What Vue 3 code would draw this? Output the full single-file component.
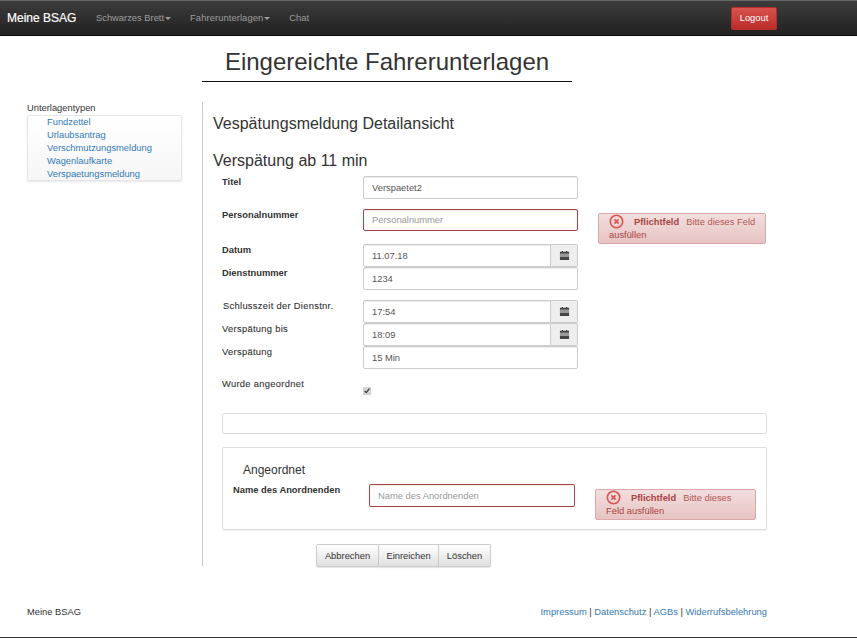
<script setup>
const sidebarItems = ['Fundzettel', 'Urlaubsantrag', 'Verschmutzungsmeldung', 'Wagenlaufkarte', 'Verspaetungsmeldung']
</script>

<template>
  <div class="page">
    <nav class="navbar">
      <a class="brand">Meine BSAG</a>
      <a class="nav-link">Schwarzes Brett<span class="caret"></span></a>
      <a class="nav-link long">Fahrerunterlagen<span class="caret"></span></a>
      <a class="nav-link">Chat</a>
      <button class="logout">Logout</button>
    </nav>

    <h1 class="title">Eingereichte Fahrerunterlagen</h1>

    <div class="content">
      <aside class="sidebar">
        <div class="side-label">Unterlagentypen</div>
        <ul class="side-list">
          <li v-for="item in sidebarItems" :key="item"><a>{{ item }}</a></li>
        </ul>
      </aside>

      <main class="main">
        <h2 class="h-detail">Vespätungsmeldung Detailansicht</h2>
        <h3 class="h-sub">Verspätung ab 11 min</h3>

        <form class="form" @submit.prevent>
          <div class="row r-titel">
            <label>Titel</label>
            <input class="field" value="Verspaetet2" />
          </div>

          <div class="row r-personal">
            <label>Personalnummer</label>
            <input class="field invalid" placeholder="Personalnummer" />
            <div class="alert a-one">
              <svg class="err-icon" viewBox="0 0 16 16"><circle cx="8" cy="8" r="6.6" /><path d="M5.8 5.8l4.4 4.4M10.2 5.8l-4.4 4.4" /></svg>
              <strong>Pflichtfeld</strong><span class="msg">Bitte dieses Feld</span><br />ausfüllen
            </div>
          </div>

          <div class="row r-datum">
            <label>Datum</label>
            <div class="group">
              <input class="field" value="11.07.18" />
              <span class="addon"><svg viewBox="0 0 12 12"><path d="M1 2h2V1h1.5v1h3V1H9v1h2v2H1zM1 5h10v1H1zM1 7h10v4H1z" /></svg></span>
            </div>
          </div>

          <div class="row r-tight">
            <label>Dienstnummer</label>
            <input class="field" value="1234" />
          </div>

          <div class="row r-schluss">
            <label class="plain nudge">Schlusszeit der Dienstnr.</label>
            <div class="group">
              <input class="field" value="17:54" />
              <span class="addon"><svg viewBox="0 0 12 12"><path d="M1 2h2V1h1.5v1h3V1H9v1h2v2H1zM1 5h10v1H1zM1 7h10v4H1z" /></svg></span>
            </div>
          </div>

          <div class="row r-tight">
            <label class="plain">Verspätung bis</label>
            <div class="group">
              <input class="field" value="18:09" />
              <span class="addon"><svg viewBox="0 0 12 12"><path d="M1 2h2V1h1.5v1h3V1H9v1h2v2H1zM1 5h10v1H1zM1 7h10v4H1z" /></svg></span>
            </div>
          </div>

          <div class="row r-tight">
            <label class="plain">Verspätung</label>
            <input class="field" value="15 Min" />
          </div>

          <div class="row r-check">
            <label class="plain">Wurde angeordnet</label>
            <input class="check" type="checkbox" checked />
          </div>

          <div class="empty-box"></div>

          <section class="panel">
            <h4 class="panel-title">Angeordnet</h4>
            <div class="panel-row">
              <label>Name des Anordnenden</label>
              <input class="field invalid" placeholder="Name des Anordnenden" />
              <div class="alert a-two">
                <svg class="err-icon" viewBox="0 0 16 16"><circle cx="8" cy="8" r="6.6" /><path d="M5.8 5.8l4.4 4.4M10.2 5.8l-4.4 4.4" /></svg>
                <strong>Pflichtfeld</strong><span class="msg">Bitte dieses</span><br />Feld ausfüllen
              </div>
            </div>
          </section>

          <div class="buttons">
            <button type="button">Abbrechen</button>
            <button type="button">Einreichen</button>
            <button type="button">Löschen</button>
          </div>
        </form>
      </main>
    </div>

    <footer class="footer">
      <span>Meine BSAG</span>
      <span class="links"><a>Impressum</a> | <a>Datenschutz</a> | <a>AGBs</a> | <a>Widerrufsbelehrung</a></span>
    </footer>
  </div>
</template>

<style>
html, body { margin: 0; background: #fff; }
</style>

<style scoped>
* { box-sizing: border-box; }
.page {
  width: 857px;
  height: 638px;
  overflow: hidden;
  position: relative;
  font-family: "Liberation Sans", Arial, sans-serif;
  font-size: 9.35px;
  line-height: 13px;
  color: #333;
  border-bottom: 1px solid #333;
}
a { color: #337ab7; }

.navbar {
  height: 36px;
  display: flex;
  align-items: center;
  background: linear-gradient(to bottom, #3c3c3c 0, #222 100%);
  border-top: 1px solid #666;
  border-bottom: 1px solid #080808;
  padding: 0 80px 0 7px;
}
.brand { color: #fff; font-size: 12px; width: 89px; text-shadow: 0 -1px 0 rgba(0,0,0,.25); -webkit-text-stroke: .2px #fff; }
.nav-link { color: #9d9d9d; margin-right: 19px; }
.nav-link.long { letter-spacing: .1px; }
.caret {
  display: inline-block;
  width: 0;
  height: 0;
  margin-left: 1px;
  vertical-align: middle;
  border-top: 3px solid #9d9d9d;
  border-left: 3px solid transparent;
  border-right: 3px solid transparent;
}
.logout {
  margin-left: auto;
  width: 46px;
  height: 23px;
  padding: 0;
  font: 9.35px "Liberation Sans", Arial, sans-serif;
  color: #fff;
  background: linear-gradient(to bottom, #d9534f 0, #b92c28 100%);
  border: 1px solid #b92c28;
  border-radius: 2px;
}

.title {
  margin: 0 0 0 202px;
  width: 370px;
  height: 46px;
  padding-top: 12px;
  font-size: 24px;
  line-height: 28px;
  font-weight: 400;
  text-align: center;
  border-bottom: 1px solid #111;
}

.content { display: flex; margin-top: 20px; }
.sidebar { width: 202px; padding: 0 20px 0 27px; }
.side-list {
  list-style: none;
  margin: 0;
  padding: 0 0 0 19px;
  height: 66px;
  width: 155px;
  background: linear-gradient(to bottom, #fff 0, #f6f6f6 100%);
  border: 1px solid #e6e6e6;
  border-radius: 2px;
  box-shadow: 0 1px 2px rgba(0,0,0,.1);
}
.main {
  width: 565px;
  height: 464px;
  border-left: 1px solid #ccc;
  padding-left: 10px;
}
.h-detail { margin: 13px 0 0; font-size: 16px; line-height: 18px; font-weight: 400; }
.h-sub { margin: 19px 0 0; font-size: 16px; line-height: 18px; font-weight: 400; }

.form { margin: 6px 0 0 9px; }
.row { display: flex; align-items: flex-start; position: relative; }
label { width: 141px; flex: none; font-weight: 700; }
label.plain { font-weight: 400; letter-spacing: .3px; -webkit-text-stroke: .1px #333; }
.field {
  width: 215px;
  height: 23px;
  padding: 0 8px;
  font: 9.35px "Liberation Sans", Arial, sans-serif;
  color: #555;
  background: #fff;
  border: 1px solid #ccc;
  border-radius: 2px;
  box-shadow: inset 0 1px 1px rgba(0,0,0,.075);
  outline: none;
}
.field::placeholder { color: #999; opacity: 1; }
.invalid { border-color: #a94442; }
.r-personal { margin-top: 10px; }
.r-personal .field { height: 22px; }
.r-datum { margin-top: 13px; }
.r-tight { margin-top: 0; }
.r-schluss { margin-top: 10px; }
.r-check { margin-top: 9px; height: 35px; }
.nudge { padding-left: 1px; }
.group { width: 215px; display: flex; }
.group .field { width: 188px; border-radius: 2px 0 0 2px; }
.addon {
  width: 27px;
  height: 23px;
  display: flex;
  align-items: center;
  justify-content: center;
  background: #eee;
  border: 1px solid #ccc;
  border-left: 0;
  border-radius: 0 2px 2px 0;
}
.addon svg { width: 11px; height: 11px; fill: #444; }
.check { width: 8px; height: 8px; margin: 9px 0 0; accent-color: #d4d4d4; }

.alert {
  position: absolute;
  padding: 2px 8px 0 10px;
  line-height: 13px;
  color: #a94442;
  background: linear-gradient(to bottom, #f2dede 0, #e7c3c3 100%);
  border: 1px solid #dca7a7;
  border-radius: 2px;
}
.msg { margin-left: 7px; opacity: .85; }
.a-one { left: 376px; top: 4px; width: 168px; height: 31px; }
.a-two { left: 362px; top: 5px; width: 161px; height: 31px; }
.err-icon {
  width: 15px;
  height: 15px;
  vertical-align: -4px;
  margin: -2px 10px 0 0;
  fill: none;
  stroke: #d9534f;
  stroke-width: 1.7;
}

.empty-box {
  width: 545px;
  height: 21px;
  border: 1px solid #ddd;
  border-radius: 2px;
}
.panel {
  width: 545px;
  height: 83px;
  margin-top: 13px;
  padding: 15px 10px 0;
  border: 1px solid #ddd;
  border-radius: 2px;
  box-shadow: 0 1px 1px rgba(0,0,0,.05);
}
.panel-title { margin: 0 0 0 10px; font-size: 12px; line-height: 14px; font-weight: 400; }
.panel-row { display: flex; position: relative; margin-top: 7px; }
.panel-row label { width: 136px; }
.panel-row .field { width: 206px; }

.buttons { display: flex; margin: 14px 0 0 94px; }
.buttons button {
  height: 23px;
  padding: 0;
  font: 9.35px "Liberation Sans", Arial, sans-serif;
  color: #333;
  background: linear-gradient(to bottom, #fff 0, #e0e0e0 100%);
  border: 1px solid #ccc;
  border-left-width: 0;
  box-shadow: 0 1px 1px rgba(0,0,0,.1);
}
.buttons button:nth-child(1) { width: 63px; border-left-width: 1px; border-radius: 2px 0 0 2px; }
.buttons button:nth-child(2) { width: 60px; }
.buttons button:nth-child(3) { width: 52px; border-radius: 0 2px 2px 0; }

.footer {
  display: flex;
  justify-content: space-between;
  margin-top: 40px;
  padding: 0 90px 0 27px;
  color: #333;
}
</style>
